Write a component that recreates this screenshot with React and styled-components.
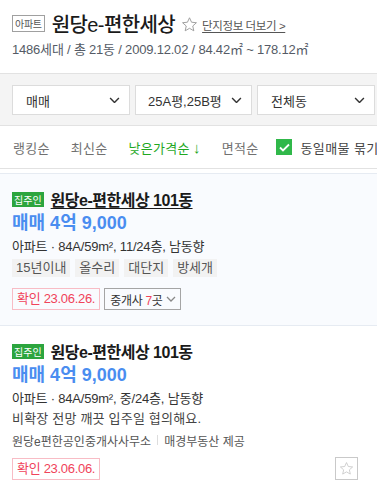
import React from "react"
import styled, { createGlobalStyle } from "styled-components"

const GlobalStyle = createGlobalStyle`
  body {
    margin: 0;
    background: #fff;
    font-family: "Liberation Sans", "Noto Sans CJK KR", sans-serif;
    color: #333;
    overflow: hidden;
  }
`

const Page = styled.div`
  width: 377px;
  overflow: hidden;
`

const Header = styled.header`
  padding: 11px 12px 0;
  height: 62px;
  border-bottom: 1px solid #e2e2e2;
`

const TitleRow = styled.div`
  display: flex;
  align-items: center;
  height: 24px;
`

const TypeBadge = styled.span`
  display: inline-flex;
  align-items: center;
  justify-content: center;
  height: 15px;
  padding: 0 2px;
  border: 1px solid #a0a0a0;
  font-size: 10px;
  letter-spacing: -0.3px;
  color: #555;
  margin-right: 7px;
`

const Title = styled.h1`
  margin: 0;
  font-size: 20px;
  font-weight: 500;
  color: #1a1a1a;
  letter-spacing: -0.6px;
`

const StarIcon = styled.svg`
  margin: 2px 4px 0 6px;
`

const MoreLink = styled.a`
  font-size: 11.5px;
  color: #555;
  letter-spacing: -0.4px;
  text-decoration: underline;
  text-underline-offset: 2px;
  margin-top: 3px;
`

const SubInfo = styled.p`
  margin: 4px 0 0;
  font-size: 13px;
  color: #555b66;
  letter-spacing: -0.2px;
`

const FilterBar = styled.div`
  background: #f4f4f4;
  padding: 11px 0 10px 12px;
  display: grid;
  grid-template-columns: 118px 117px 118px;
  gap: 5px;
  border-bottom: 1px solid #e2e2e2;
`

const SelectBox = styled.div`
  height: 28px;
  background: #fff;
  border: 1px solid #dcdcdc;
  display: flex;
  align-items: center;
  justify-content: space-between;
  padding: 0 9px 0 ${(p) => p.$pad || 13}px;
  font-size: 13px;
  color: #333;
`

const SortRow = styled.div`
  height: 42px;
  display: flex;
  align-items: center;
  padding-left: 13px;
  font-size: 13px;
  color: #666;
  border-bottom: 1px solid #e2e2e2;
  white-space: nowrap;
`

const SortItem = styled.span`
  color: ${(p) => (p.$active ? "#1fa81f" : "#707070")};
  letter-spacing: 0.3px;
`

const Arrow = styled.span`
  font-size: 15px;
  margin-left: 3px;
`

const Divider = styled.span`
  width: 1px;
  height: 11px;
  background: #ddd;
  margin: 0 10px 0 11px;
`

const CheckWrap = styled.label`
  display: flex;
  align-items: center;
  margin-left: 18px;
  color: #444;
  letter-spacing: 0.4px;
`

const CheckBox = styled.span`
  width: 16px;
  height: 16px;
  background: #30b84a;
  display: flex;
  align-items: center;
  justify-content: center;
  margin-right: 8px;
`

const List = styled.div`
  margin-top: 4px;
`

const Card = styled.article`
  background: ${(p) => (p.$highlight ? "#f9fbfe" : "#fff")};
  border-top: 1px solid #e6ebf2;
  padding: 14px 12px 15px;
`

const CardTitleRow = styled.div`
  display: flex;
  align-items: center;
  height: 22px;
`

const OwnerBadge = styled.span`
  display: inline-flex;
  align-items: center;
  justify-content: center;
  background: #2ca53e;
  color: #fff;
  font-size: 10px;
  height: 15px;
  padding: 0 2px;
  margin-right: 7px;
`

const CardTitle = styled.span`
  font-size: 16px;
  font-weight: bold;
  color: #1a1a1a;
  letter-spacing: -0.5px;
  text-decoration: ${(p) => (p.$underline ? "underline" : "none")};
  text-underline-offset: 2px;
`

const Price = styled.div`
  font-size: 18px;
  font-weight: bold;
  color: #4a8df0;
  line-height: 26px;
`

const Detail = styled.div`
  font-size: 13px;
  color: #333;
  line-height: 20px;
  margin-top: 1px;
  letter-spacing: -0.2px;
`

const Desc = styled.div`
  font-size: 13px;
  color: #444;
  line-height: 20px;
  letter-spacing: 0.2px;
`

const Tags = styled.div`
  display: flex;
  gap: 5px;
  margin-top: 2px;
`

const Tag = styled.span`
  background: #f2f2f2;
  color: #555;
  font-size: 13px;
  height: 18px;
  line-height: 18px;
  padding: 0 4px;
`

const Agency = styled.div`
  display: flex;
  align-items: center;
  font-size: 12px;
  color: #555;
  margin-top: 2px;
  height: 18px;
`

const SmallDivider = styled.span`
  width: 1px;
  height: 10px;
  background: #ddd;
  margin: 0 6px;
`

const ActionRow = styled.div`
  display: flex;
  align-items: center;
  gap: 4px;
  margin-top: ${(p) => p.$gap || 11}px;
`

const Confirm = styled.span`
  height: 20px;
  border: 1px solid #f8bcc5;
  color: #f0435a;
  font-size: 13px;
  line-height: 20px;
  padding: 0 4px;
  letter-spacing: -0.3px;
`

const BrokerButton = styled.span`
  height: 20px;
  border: 1px solid #a5a5a5;
  color: #333;
  font-size: 12px;
  display: inline-flex;
  align-items: center;
  padding: 0 4px 0 5px;
  gap: 3px;
  letter-spacing: -0.3px;
  em {
    font-style: normal;
    color: #f0435a;
  }
`

const FavButton = styled.span`
  margin-left: auto;
  margin-right: 7px;
  width: 21px;
  height: 21px;
  border: 1px solid #c9c9c9;
  display: flex;
  align-items: center;
  justify-content: center;
`

const Chevron = ({ size = 11, color = "#333" }) => (
  <svg width={size} height={size * 0.6} viewBox="0 0 10 6">
    <path d="M1 1l4 4 4-4" fill="none" stroke={color} strokeWidth="1.3" />
  </svg>
)

const Star = ({ size = 16, color = "#aaa" }) => (
  <svg width={size} height={size} viewBox="0 0 24 24">
    <path
      d="M12 2.5l2.9 6.3 6.9.7-5.2 4.6 1.5 6.8L12 17.4l-6.1 3.5 1.5-6.8L2.2 9.5l6.9-.7z"
      fill="none"
      stroke={color}
      strokeWidth="1.3"
      strokeLinejoin="round"
    />
  </svg>
)

const listings = [
  {
    id: 1,
    highlight: true,
    underline: true,
    floor: "11/24층",
    tags: ["15년이내", "올수리", "대단지", "방세개"],
    date: "23.06.26.",
    brokers: 7,
  },
  {
    id: 2,
    floor: "중/24층",
    desc: "비확장 전망 깨끗 입주일 협의해요.",
    agency: ["원당e편한공인중개사사무소", "매경부동산 제공"],
    date: "23.06.06.",
  },
]

function ListingCard({ item }) {
  return (
    <Card $highlight={item.highlight}>
      <CardTitleRow>
        <OwnerBadge>집주인</OwnerBadge>
        <CardTitle $underline={item.underline}>원당e-편한세상 101동</CardTitle>
      </CardTitleRow>
      <Price>매매 4억 9,000</Price>
      <Detail>아파트 · 84A/59m², {item.floor}, 남동향</Detail>
      {item.desc && <Desc>{item.desc}</Desc>}
      {item.tags && (
        <Tags>
          {item.tags.map((t) => (
            <Tag key={t}>{t}</Tag>
          ))}
        </Tags>
      )}
      {item.agency && (
        <Agency>
          {item.agency[0]}
          <SmallDivider />
          {item.agency[1]}
        </Agency>
      )}
      <ActionRow $gap={item.agency ? 8 : 11}>
        <Confirm>확인 {item.date}</Confirm>
        {item.brokers && (
          <BrokerButton>
            <span>
              중개사 <em>{item.brokers}</em>곳
            </span>
            <Chevron size={10} color="#888" />
          </BrokerButton>
        )}
        {!item.brokers && (
          <FavButton>
            <Star size={15} color="#c5c5c5" />
          </FavButton>
        )}
      </ActionRow>
    </Card>
  )
}

export default function App() {
  return (
    <Page>
      <GlobalStyle />
      <Header>
        <TitleRow>
          <TypeBadge>아파트</TypeBadge>
          <Title>원당e-편한세상</Title>
          <StarIcon width="17" height="17" viewBox="0 0 24 24">
            <path
              d="M12 2.5l2.9 6.3 6.9.7-5.2 4.6 1.5 6.8L12 17.4l-6.1 3.5 1.5-6.8L2.2 9.5l6.9-.7z"
              fill="none"
              stroke="#999"
              strokeWidth="1.3"
              strokeLinejoin="round"
            />
          </StarIcon>
          <MoreLink>단지정보 더보기 &gt;</MoreLink>
        </TitleRow>
        <SubInfo>1486세대 / 총 21동 / 2009.12.02 / 84.42㎡ ~ 178.12㎡</SubInfo>
      </Header>
      <FilterBar>
        <SelectBox>
          매매
          <Chevron />
        </SelectBox>
        <SelectBox $pad={12}>
          25A평,25B평
          <Chevron />
        </SelectBox>
        <SelectBox>
          전체동
          <Chevron />
        </SelectBox>
      </FilterBar>
      <SortRow>
        <SortItem>랭킹순</SortItem>
        <Divider />
        <SortItem>최신순</SortItem>
        <Divider />
        <SortItem $active>
          낮은가격순<Arrow>↓</Arrow>
        </SortItem>
        <Divider />
        <SortItem>면적순</SortItem>
        <CheckWrap>
          <CheckBox>
            <svg width="11" height="9" viewBox="0 0 11 9">
              <path d="M1 4.5l3 3 6-6" fill="none" stroke="#fff" strokeWidth="1.8" />
            </svg>
          </CheckBox>
          동일매물 묶기
        </CheckWrap>
      </SortRow>
      <List>
        {listings.map((item) => (
          <ListingCard key={item.id} item={item} />
        ))}
      </List>
    </Page>
  )
}
